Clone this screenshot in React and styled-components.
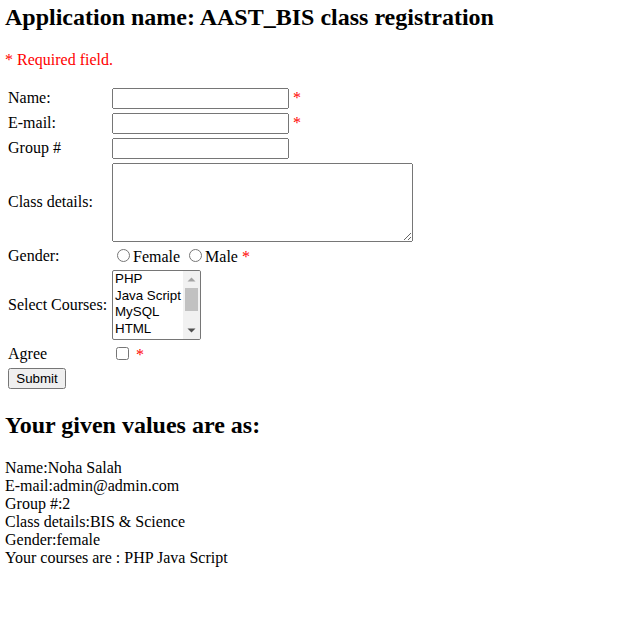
import React from "react";
import styled, { createGlobalStyle } from "styled-components";

const GlobalStyle = createGlobalStyle`
  html, body {
    margin: 0;
    padding: 0;
    background: #ffffff;
  }
  body {
    font-family: "Liberation Serif", "Times New Roman", serif;
    font-size: 16px;
    line-height: 18px;
    color: #000000;
  }
`;

const Page = styled.div`
  padding: 4px 5px 0;
`;

const Heading = styled.h2`
  margin: ${(p) => (p.$first ? "0" : "19.92px")} 0 19.92px;
  font-size: 24px;
  line-height: 27px;
  font-weight: bold;
`;

const Note = styled.p`
  margin: 0 0 16px;
  color: #ff0000;
`;

const FormGrid = styled.form`
  display: grid;
  grid-template-columns: minmax(100px, max-content) max-content;
  column-gap: 4px;
  row-gap: 4px;
  align-items: center;
  justify-content: start;
  padding: 3px;
`;

const Label = styled.div`
  white-space: nowrap;
`;

const FieldRow = styled.div`
  display: flex;
  align-items: center;
  gap: 4px;
`;

const InlineField = styled.div`
  white-space: nowrap;
`;

const Star = styled.span`
  color: #ff0000;
`;

const TextInput = styled.input`
  box-sizing: border-box;
  width: 177px;
  height: 21px;
  margin: 0;
  font: 13.33px "Liberation Sans", Arial, sans-serif;
`;

const TextArea = styled.textarea`
  display: block;
  box-sizing: border-box;
  width: 301px;
  height: 79px;
  margin: 0;
  font: 13.33px "Liberation Mono", monospace;
`;

const Radio = styled.input.attrs({ type: "radio" })`
  margin: 3px 3px 0 5px;
`;

const Check = styled.input.attrs({ type: "checkbox" })`
  margin: 3px 3px 3px 4px;
  vertical-align: baseline;
`;

const ListBox = styled.div`
  display: flex;
  box-sizing: border-box;
  width: 89px;
  height: 70px;
  border: 1px solid #767676;
  border-radius: 2px;
  overflow: hidden;
  background: #ffffff;
  font: 13.33px "Liberation Sans", Arial, sans-serif;
`;

const Options = styled.div`
  flex: 1;
  overflow: hidden;
`;

const Option = styled.div`
  padding: 0 2px 1px;
  line-height: 15.67px;
  white-space: nowrap;
  color: #000000;
`;

const ScrollTrack = styled.div`
  width: 17px;
  background: #f1f1f1;
  display: flex;
  flex-direction: column;
  align-items: center;
`;

const ScrollButton = styled.div`
  height: 17px;
  width: 17px;
  display: flex;
  align-items: center;
  justify-content: center;
`;

const ThumbArea = styled.div`
  flex: 1;
  width: 17px;
  display: flex;
  justify-content: center;
`;

const Thumb = styled.div`
  width: 13px;
  height: 23px;
  background: #c1c1c1;
`;

const SubmitButton = styled.button`
  box-sizing: border-box;
  height: 21px;
  min-width: 58px;
  padding: 1px 6px;
  margin: 0;
  justify-self: start;
  font: 13.33px "Liberation Sans", Arial, sans-serif;
  color: #000000;
`;

const Results = styled.div`
  line-height: 18px;
`;

const Arrow = ({ up, color }) => (
  <svg width="9" height="5" viewBox="0 0 9 5">
    <polygon
      points={up ? "0.5,4.5 8.5,4.5 4.5,0.5" : "0.5,0.5 8.5,0.5 4.5,4.5"}
      fill={color}
    />
  </svg>
);

const courses = ["PHP", "Java Script", "MySQL", "HTML", "CSS", "Python", "Java", "C++", "Oracle"];

export default function App() {
  return (
    <>
      <GlobalStyle />
      <Page>
        <Heading $first>Application name: AAST_BIS class registration</Heading>
        <Note>* Required field.</Note>
        <FormGrid onSubmit={(e) => e.preventDefault()}>
          <Label>Name:</Label>
          <FieldRow>
            <TextInput type="text" />
            <Star>*</Star>
          </FieldRow>

          <Label>E-mail:</Label>
          <FieldRow>
            <TextInput type="text" />
            <Star>*</Star>
          </FieldRow>

          <Label>Group #</Label>
          <FieldRow>
            <TextInput type="text" />
          </FieldRow>

          <Label>Class details:</Label>
          <FieldRow>
            <TextArea />
          </FieldRow>

          <Label>Gender:</Label>
          <InlineField>
            <Radio name="gender" />Female
            {" "}
            <Radio name="gender" />Male <Star>*</Star>
          </InlineField>

          <Label>Select Courses:</Label>
          <FieldRow>
            <ListBox>
              <Options>
                {courses.map((c) => (
                  <Option key={c}>{c}</Option>
                ))}
              </Options>
              <ScrollTrack>
                <ScrollButton>
                  <Arrow up color="#a3a3a3" />
                </ScrollButton>
                <ThumbArea>
                  <Thumb />
                </ThumbArea>
                <ScrollButton>
                  <Arrow color="#505050" />
                </ScrollButton>
              </ScrollTrack>
            </ListBox>
          </FieldRow>

          <Label>Agree</Label>
          <InlineField>
            <Check /> <Star>*</Star>
          </InlineField>

          <SubmitButton type="submit">Submit</SubmitButton>
        </FormGrid>

        <Heading>Your given values are as:</Heading>
        <Results>
          <div>Name:Noha Salah</div>
          <div>E-mail:admin@admin.com</div>
          <div>Group #:2</div>
          <div>Class details:BIS &amp; Science</div>
          <div>Gender:female</div>
          <div>Your courses are : PHP Java Script</div>
        </Results>
      </Page>
    </>
  );
}
